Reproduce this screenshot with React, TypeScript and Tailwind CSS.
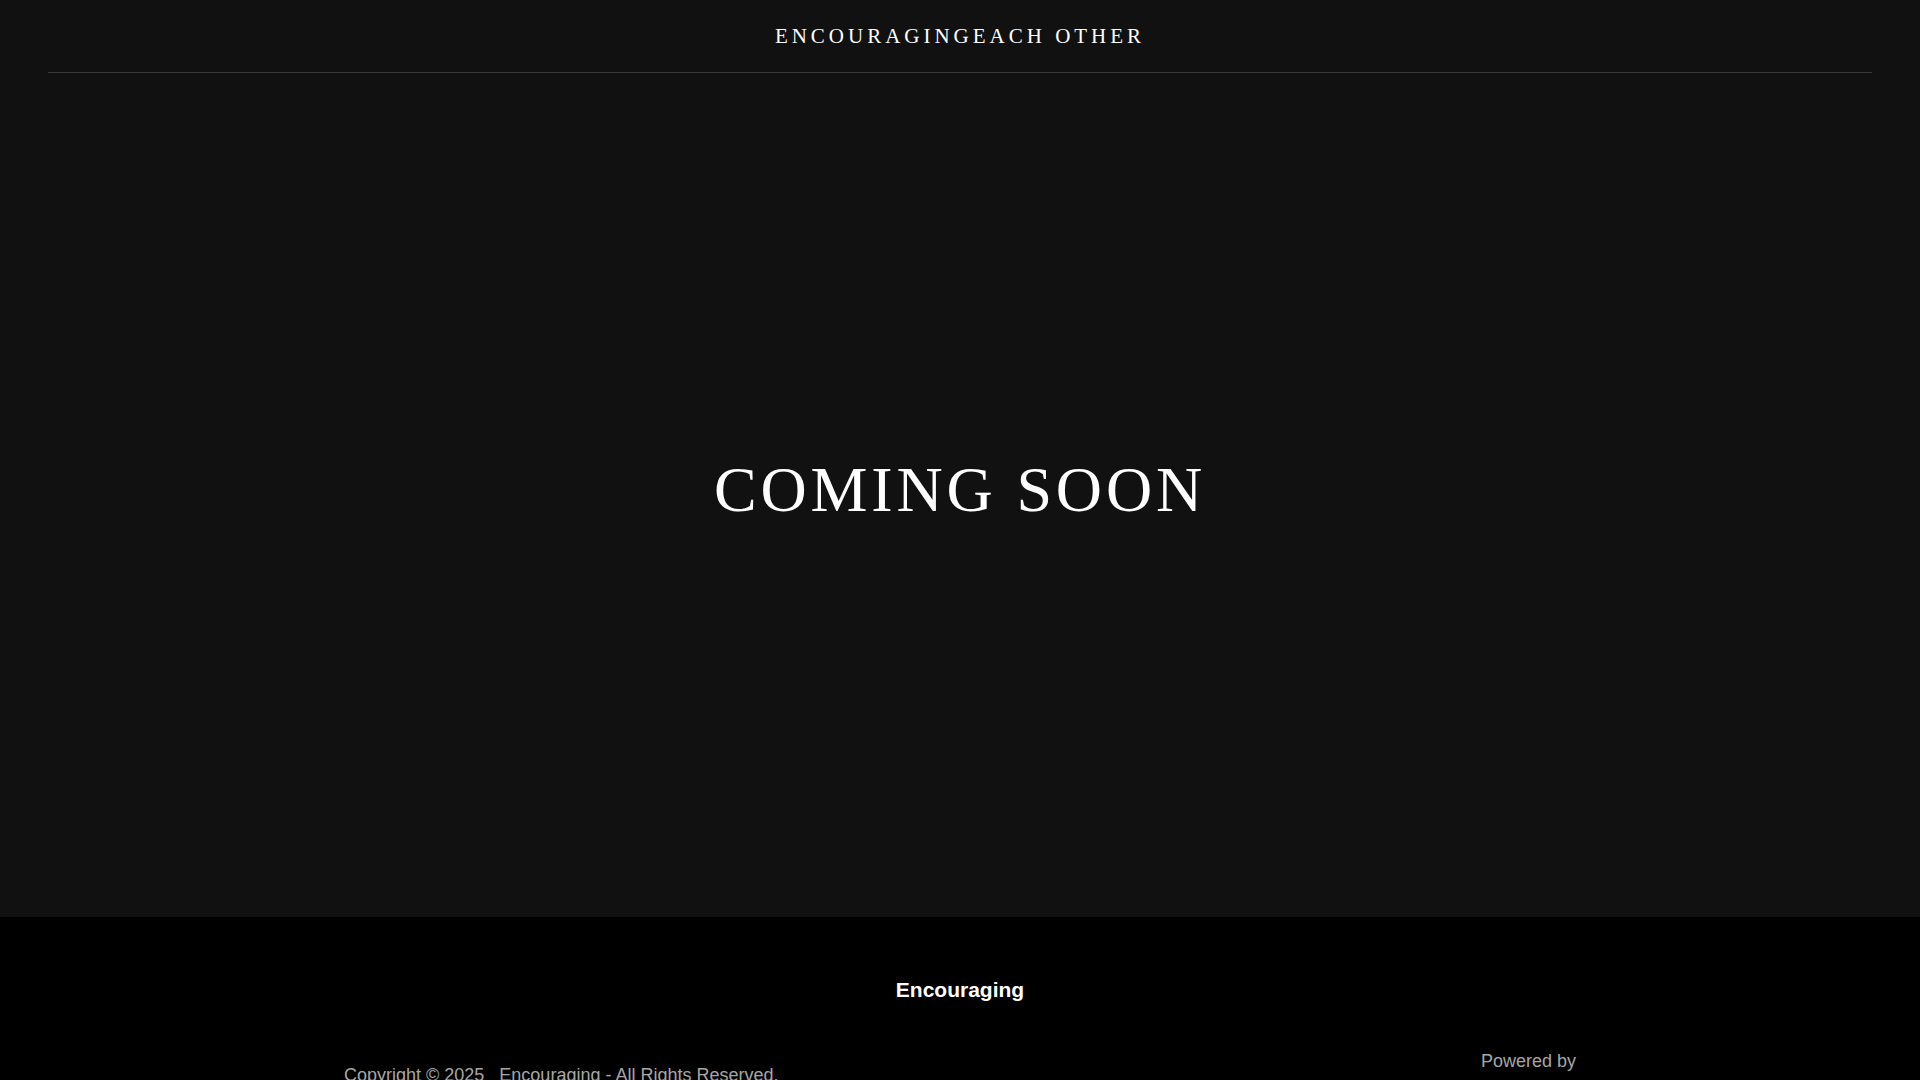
export default function App() {
  return (
    <div className="h-screen overflow-y-scroll bg-black" style={{ fontFamily: '"Liberation Sans", Arial, sans-serif' }}>
      <div className="min-h-[1160px] bg-black">
        <div className="bg-[#111111] h-[917px] flex flex-col">
          <header className="px-[48px]">
            <div className="h-[73px] border-b border-[#3a3a3a] flex items-center justify-center">
              <span className="text-white text-[21px] tracking-[0.19em] leading-none" style={{ fontFamily: '"Liberation Serif", "Times New Roman", serif' }}>
                ENCOURAGINGEACH OTHER
              </span>
            </div>
          </header>
          <div className="flex-1 flex items-center justify-center">
            <h1 className="text-white text-[64px] tracking-[0.06em] leading-none -mt-[10px]" style={{ fontFamily: '"Liberation Serif", "Times New Roman", serif' }}>
              COMING SOON
            </h1>
          </div>
        </div>
        <footer className="bg-black pt-[62px] pb-[40px]">
          <div className="text-center text-white font-bold text-[21px] leading-none">Encouraging</div>
          <div className="mx-auto w-[1232px] flex justify-between items-start mt-[48px]">
            <div className="text-[#a6a6a6] text-[18px] mt-[14px]">Copyright © 2025 &nbsp; Encouraging - All Rights Reserved.</div>
            <div className="text-[#a6a6a6] text-[18px]">Powered by</div>
          </div>
        </footer>
      </div>
    </div>
  );
}
